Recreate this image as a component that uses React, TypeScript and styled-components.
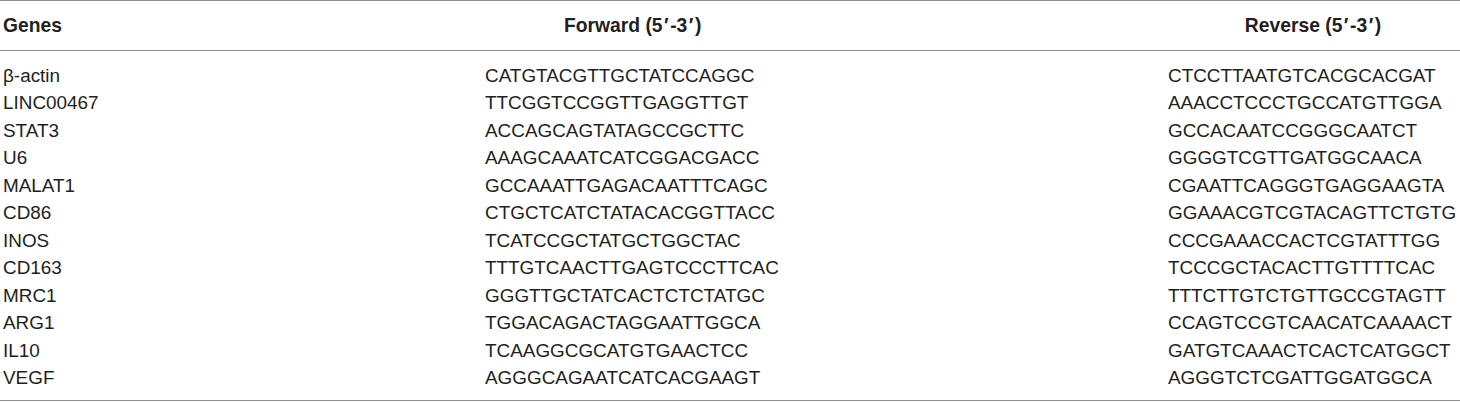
import styled, { createGlobalStyle } from 'styled-components'

interface Primer {
  gene: string
  forward: string
  reverse: string
}

const primers: Primer[] = [
  { gene: 'β-actin', forward: 'CATGTACGTTGCTATCCAGGC', reverse: 'CTCCTTAATGTCACGCACGAT' },
  { gene: 'LINC00467', forward: 'TTCGGTCCGGTTGAGGTTGT', reverse: 'AAACCTCCCTGCCATGTTGGA' },
  { gene: 'STAT3', forward: 'ACCAGCAGTATAGCCGCTTC', reverse: 'GCCACAATCCGGGCAATCT' },
  { gene: 'U6', forward: 'AAAGCAAATCATCGGACGACC', reverse: 'GGGGTCGTTGATGGCAACA' },
  { gene: 'MALAT1', forward: 'GCCAAATTGAGACAATTTCAGC', reverse: 'CGAATTCAGGGTGAGGAAGTA' },
  { gene: 'CD86', forward: 'CTGCTCATCTATACACGGTTACC', reverse: 'GGAAACGTCGTACAGTTCTGTG' },
  { gene: 'INOS', forward: 'TCATCCGCTATGCTGGCTAC', reverse: 'CCCGAAACCACTCGTATTTGG' },
  { gene: 'CD163', forward: 'TTTGTCAACTTGAGTCCCTTCAC', reverse: 'TCCCGCTACACTTGTTTTCAC' },
  { gene: 'MRC1', forward: 'GGGTTGCTATCACTCTCTATGC', reverse: 'TTTCTTGTCTGTTGCCGTAGTT' },
  { gene: 'ARG1', forward: 'TGGACAGACTAGGAATTGGCA', reverse: 'CCAGTCCGTCAACATCAAAACT' },
  { gene: 'IL10', forward: 'TCAAGGCGCATGTGAACTCC', reverse: 'GATGTCAAACTCACTCATGGCT' },
  { gene: 'VEGF', forward: 'AGGGCAGAATCATCACGAAGT', reverse: 'AGGGTCTCGATTGGATGGCA' },
]

const GlobalStyle = createGlobalStyle`
  body {
    margin: 0;
    background: #ffffff;
    font-family: 'Liberation Sans', Arial, sans-serif;
  }
`

export default function App() {
  return (
    <>
      <GlobalStyle />
      <Table>
        <HeaderRow>
          <HeaderCell>Genes</HeaderCell>
          <HeaderCell $indent={82}>
            Forward (5<Prime>′</Prime>-3<Prime>′</Prime>)
          </HeaderCell>
          <HeaderCell $center>
            Reverse (5<Prime>′</Prime>-3<Prime>′</Prime>)
          </HeaderCell>
        </HeaderRow>
        <Body>
          {primers.map((p) => (
            <Row key={p.gene}>
              <Cell>{p.gene}</Cell>
              <Cell>{p.forward}</Cell>
              <Cell $inset={2}>{p.reverse}</Cell>
            </Row>
          ))}
        </Body>
      </Table>
    </>
  )
}

const Table = styled.div`
  width: 1460px;
  border-top: 1px solid #8c8c8c;
  border-bottom: 1px solid #8c8c8c;
  color: #231f20;
  font-size: 18.9px;
`

const Columns = styled.div`
  display: grid;
  grid-template-columns: 482px 684px 294px;
`

const HeaderRow = styled(Columns)`
  height: 49px;
  align-items: center;
  border-bottom: 1px solid #8c8c8c;
  font-weight: bold;
  font-size: 19.3px;
`

const HeaderCell = styled.div<{ $indent?: number; $center?: boolean }>`
  padding-left: ${(p) => (p.$center ? 0 : p.$indent ?? 3)}px;
  text-align: ${(p) => (p.$center ? 'center' : 'left')};
  line-height: 22px;
  white-space: nowrap;
`

const Prime = styled.span`
  margin: 0 1.5px;
`

const Body = styled.div`
  padding: 11px 0 8px;
`

const Row = styled(Columns)`
  height: 27.5px;
  align-items: center;
`

const Cell = styled.div<{ $inset?: number }>`
  padding-left: ${(p) => p.$inset ?? 3}px;
  line-height: 22px;
  white-space: nowrap;
`
